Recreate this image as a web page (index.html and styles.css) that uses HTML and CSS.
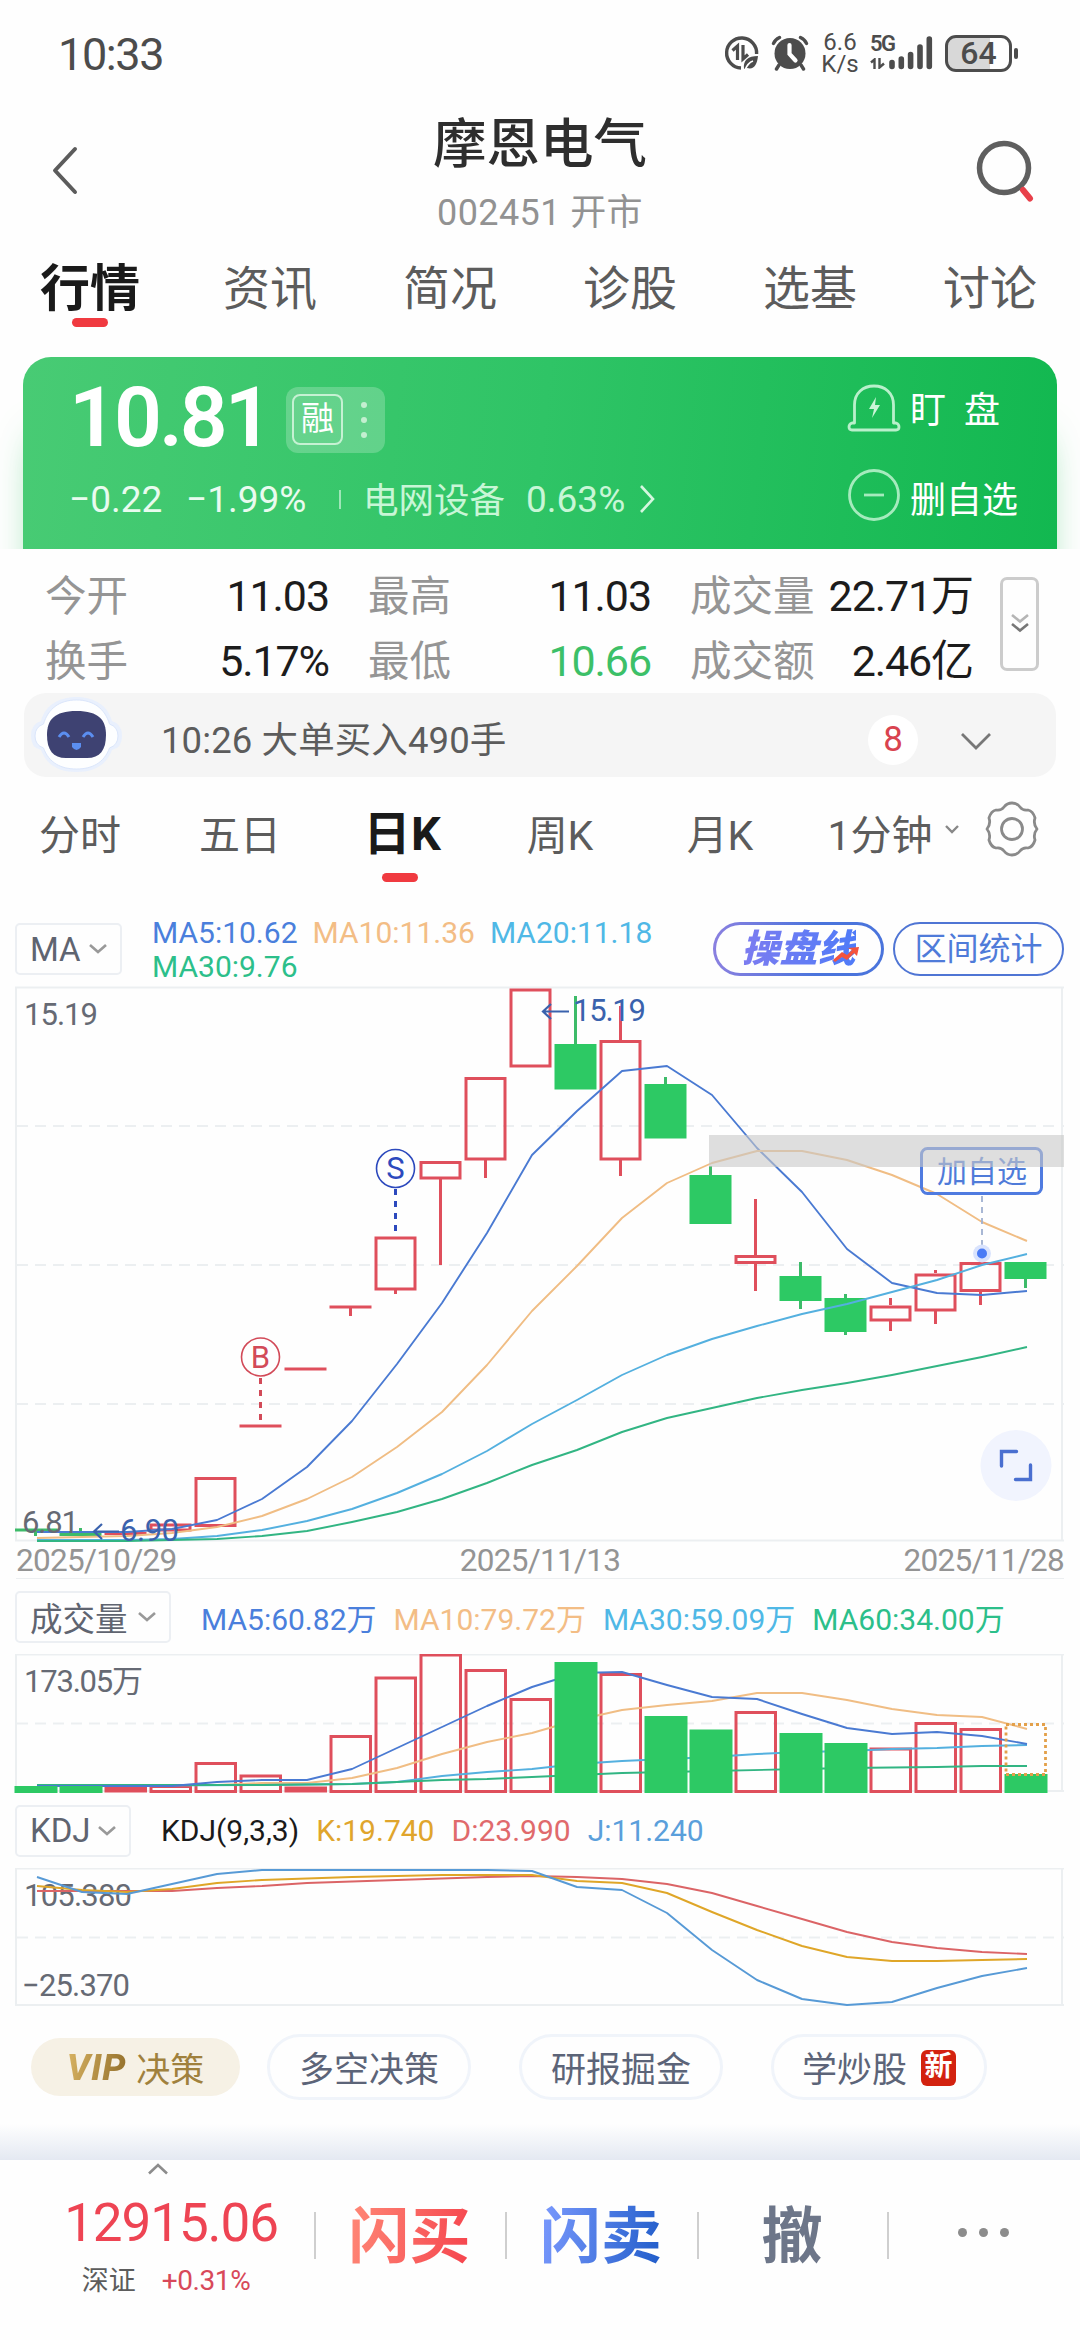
FILE: index.html
```html
<!DOCTYPE html>
<html lang="zh-CN">
<head>
<meta charset="utf-8">
<title>摩恩电气 002451</title>
<link rel="stylesheet" href="styles.css">
</head>
<body>
<div class="screen">

<div class="status">
  <span class="clock">10:33</span>
  <div class="status-right">
    <svg class="ic-data" width="36" height="36" viewBox="0 0 36 36" fill="none" stroke="#4c4c4c" stroke-width="3.4"><path d="M32.6 19A15 15 0 1 0 17 33"/><path d="M8.500 15.500l5-4.500v14M19 10v14l5-4.500" stroke-width="3.2"/><path d="M20 34c-1-9 4-13 14-13-1 9-4 14-11 12z" fill="#4c4c4c" stroke="none"/><path d="M21 35c2-5 5-8 8-9" stroke="#fff" stroke-width="1.800"/></svg>
    <svg class="ic-alarm" width="38" height="36" viewBox="0 0 38 36" fill="none" stroke="#4c4c4c" stroke-width="3.4" stroke-linecap="round"><circle cx="19" cy="18.500" r="15.500" fill="#4c4c4c" stroke="none"/><path d="M2.500 8.500Q4 4.500 8.500 2.500M35.500 8.500Q34 4.500 29.500 2.500M8 30l-2.500 4M30 30l2.500 4"/><path d="M18.500 10v9l6 6.500" stroke="#fff" stroke-width="4.200"/></svg>
    <div class="speed"><span>6.6</span><span>K/s</span></div>
    <div class="signal">
      <div class="net"><b>5G</b><svg width="15" height="11" viewBox="0 0 15 11" fill="none" stroke="#4c4c4c" stroke-width="2.400"><path d="M1 4.500L4.500 1.500V11M9.500 0v9.500L14 5.500"/></svg></div>
      <svg width="44" height="36" viewBox="0 0 44 36" stroke="#4c4c4c" stroke-width="5.600" stroke-linecap="round"><path d="M3 27.500V31.500M12.300 24V31.500M21.600 19.500V31.500M31 12V31.500M40.300 4V31.500"/></svg>
    </div>
    <div class="battery"><span>64</span></div><i class="battery-tip"></i>
  </div>
</div>

<header class="top">
  <svg width="30" height="50" viewBox="0 0 30 50" fill="none" stroke="#5c5c5c" stroke-width="4" stroke-linecap="round" stroke-linejoin="round"><path d="M25 4L5 25.500L25 47"/></svg>
  <div class="title"><h1>摩恩电气</h1><p>002451 开市</p></div>
  <svg width="62" height="66" viewBox="0 0 62 66" fill="none"><circle cx="29" cy="29" r="24.500" stroke="#5f5f5f" stroke-width="5.500"/><path d="M48 51L55 59.500" stroke="#e8404a" stroke-width="6" stroke-linecap="round"/></svg>
</header>

<nav class="tabs"><span class="on">行情</span><span>资讯</span><span>简况</span><span>诊股</span><span>选基</span><span>讨论</span></nav>

<div class="quote-wrap"><section class="quote">
  <div class="q-left">
    <div class="price-row"><strong>10.81</strong><div class="rong"><span>融</span><i></i></div></div>
    <div class="change-row"><span class="chg">−0.22</span><span class="pct">−1.99%</span><i></i><span class="ind">电网设备</span><span class="indp">0.63%</span><svg width="18" height="30" viewBox="0 0 18 30" fill="none" stroke="#d4f7df" stroke-width="2.600"><path d="M2 2L14 15L2 28"/></svg></div>
  </div>
  <div class="q-right">
    <div class="act"><svg width="54" height="50" viewBox="0 0 54 50" fill="none" stroke="#b9f0cb" stroke-width="2.800" stroke-linejoin="round"><path d="M7.500 40V22C7.500 10 16 3 27 3S46.500 10 46.500 22V40H49Q52 41 52 44T49 47H5Q2 47 2 44T5 40Z"/><path d="M29 14L22 26H27L25 35L33 22H28Z" fill="#c9f5d7" stroke="none"/></svg><span class="watch">盯 盘</span></div>
    <div class="act"><svg width="54" height="54" viewBox="0 0 54 54" fill="none" stroke="#a5ebbd" stroke-width="2.800"><circle cx="27" cy="27" r="24.500"/><path d="M17 27H37"/></svg><span class="drop-fav">删自选</span></div>
  </div>
</section></div>

<section class="stats">
  <div class="cells">
    <div><label>今开</label><b>11.03</b></div><div><label>最高</label><b>11.03</b></div><div><label>成交量</label><b>22.71万</b></div>
    <div><label>换手</label><b>5.17%</b></div><div><label>最低</label><b class="down">10.66</b></div><div><label>成交额</label><b>2.46亿</b></div>
  </div>
  <div class="more"><svg width="22" height="24" viewBox="0 0 22 24" fill="none" stroke-width="2.600"><path d="M3 3L11 9.500L19 3" stroke="#b5b5b5"/><path d="M3 12L11 18.500L19 12" stroke="#777"/></svg></div>
</section>

<section class="notice">
  <svg width="94" height="78" viewBox="0 0 94 78">
    <path d="M46.500 1C65 1 78 10 82 25Q92 28 92 40T82 54C76 70 63 76 46.500 76S17 70 11 54Q1 52 1 40T11 25C15 10 28 1 46.500 1Z" fill="#e9f0fd"/>
    <path d="M46.500 4C64 4 75 13 79.500 28Q88 31 88 40T79.500 52C74 67 62 73 46.500 73S19 67 13.500 52Q5 49 5 40T13.500 28C18 13 29 4 46.500 4Z" fill="#fdfeff" stroke="#dbe6fb"/>
    <path d="M46.500 15C69 15 76 24 76 39S70 62 57 62H36C23 62 17 54 17 39S24 15 46.500 15Z" fill="#3e4272"/>
    <path d="M29 41Q34 33 39 41M53 41Q58 33 63 41" fill="none" stroke="#5b8ef0" stroke-width="3"/>
    <path d="M42 47H51V51Q46.500 57 42 51Z" fill="#5b8ef0"/>
  </svg>
  <span class="msg">10:26 大单买入490手</span><b>8</b>
  <svg width="34" height="22" viewBox="0 0 34 22" fill="none" stroke="#777" stroke-width="2.800"><path d="M3 4L17 18L31 4"/></svg>
</section>

<nav class="periods">
  <span>分时</span><span>五日</span><span class="on">日K</span><span>周K</span><span>月K</span><span class="mins">1分钟</span>
  <svg class="tiny" width="16" height="12" viewBox="0 0 16 12" fill="none" stroke="#888" stroke-width="2.400"><path d="M2 2L8 8L14 2"/></svg>
  <svg class="gear" width="58" height="58" viewBox="0 0 58 58" fill="none" stroke="#8a8a8a" stroke-width="2.800" stroke-linejoin="round"><path d="M21 7Q24 3 29 3T37 7Q40 11 45 10Q50 11 52 18Q50 24 54 29Q50 34 52 40Q50 47 45 48Q40 47 37 51Q34 55 29 55T21 51Q18 47 13 48Q8 47 6 40Q8 34 4 29Q8 24 6 18Q8 11 13 10Q18 11 21 7Z"/><circle cx="29" cy="29" r="10.500"/></svg>
</nav>

<div class="ind-row ma-row">
  <div class="drop"><span>MA</span><svg width="18" height="12" viewBox="0 0 18 12" fill="none" stroke="#999" stroke-width="2.600"><path d="M1 2L9 9L17 2"/></svg></div>
  <div class="legend wrap"><span class="c-blue">MA5:10.62</span><span class="c-orange">MA10:11.36</span><span class="c-sky">MA20:11.18</span><span class="c-green">MA30:9.76</span></div>
  <div class="pill trade"><em>操盘线</em><svg width="28" height="16" viewBox="0 0 28 16" fill="#f4533d"><path d="M1 13L10 5L15 8L20 3L16 1L27 0L25 9L22 6L15 13L10 10L3 15Z"/></svg></div>
  <div class="pill">区间统计</div>
</div>

<div class="kchart">
<svg width="1080" height="554" viewBox="0 987 1080 554">
  <g class="frame"><path d="M15 987.500H1064M15 1540.500H1064M16 987V1541M1062 987V1541"/><path class="dash" d="M17 1126H1064M17 1265H1064M17 1404H1064"/></g>
  <g class="up">
    <path d="M104.500 1533.500H146.500M239.500 1426H281.500M284.500 1369H326.500M329.500 1307H371.500M350.500 1307V1316M395.500 1290V1294M440.500 1179V1265M485.500 1160V1178M620.500 1006V1040M620.500 1160V1176M755.500 1199V1255M755.500 1263V1291M890.500 1298V1305M890.500 1321V1331M935.500 1270V1273M935.500 1311V1324M980.500 1256V1262M980.500 1292V1305"/>
    <rect x="151" y="1525" width="39" height="5"/><rect x="196" y="1478.500" width="39" height="47"/><rect x="376" y="1238" width="39" height="51"/><rect x="421" y="1162.500" width="39" height="15.500"/><rect x="466" y="1078.500" width="39" height="80.500"/><rect x="511" y="990" width="39" height="76"/><rect x="601" y="1041.500" width="39" height="117.500"/><rect x="736" y="1256.500" width="39" height="6"/><rect x="871" y="1307" width="39" height="13"/><rect x="916" y="1275" width="39" height="35"/><rect x="961" y="1263.500" width="39" height="27"/>
  </g>
  <g class="dn">
    <path d="M15 1530H57.500M35.500 1530V1536M59.500 1534.500H101.500M80.500 1528V1536M575.500 996V1044M665.500 1077V1084M710.500 1166V1175M800.500 1262V1309M845.500 1294V1335M1025.500 1279V1288"/>
    <path class="fill" d="M554.500 1044h42v45.500h-42zM644.500 1084h42v54.500h-42zM689.500 1175h42v49h-42zM779.500 1276h42v25h-42zM824.500 1298h42v34h-42zM1004.500 1262h42v17h-42z"/>
  </g>
  <polyline class="l-blue" points="37,1532 82,1532 127,1532 172,1529 217,1520 262,1499 307,1467 352,1421 397,1364 442,1303 487,1233 532,1155 577,1111 622,1071 667,1066 712,1095 757,1148 802,1192 847,1249 892,1283 937,1293 982,1295 1027,1291"/>
  <polyline class="l-orange" points="37,1538 82,1537 127,1536 172,1533 217,1527 262,1516 307,1499 352,1477 397,1447 442,1412 487,1365 532,1311 577,1266 622,1218 667,1183 712,1163 757,1151 802,1151 847,1160 892,1175 937,1194 982,1222 1027,1241"/>
  <polyline class="l-sky" points="37,1540 127,1540 172,1539 217,1536 262,1530 307,1521 352,1509 397,1493 442,1474 487,1451 532,1424 577,1400 622,1375 667,1355 712,1339 757,1326 802,1314 847,1304 892,1292 937,1280 982,1265 1027,1254"/>
  <polyline class="l-green" points="37,1541 127,1541 172,1540 217,1539 262,1536 307,1531 352,1522 397,1512 442,1499 487,1483 532,1465 577,1450 622,1432 667,1418 712,1408 757,1398 802,1390 847,1383 892,1375 937,1366 982,1357 1027,1347"/>
  <g class="mark-s"><circle cx="395.500" cy="1168.500" r="19"/><path d="M395.500 1189V1237"/><text x="395.500" y="1179" text-anchor="middle">S</text></g>
  <g class="mark-b"><circle cx="260.500" cy="1357" r="19"/><path d="M260.500 1378V1426"/><text x="260.500" y="1368" text-anchor="middle">B</text></g>
  <text class="axis" x="24" y="1025" textLength="74">15.19</text>
  <text class="axis" x="22" y="1533" textLength="57">6.81</text>
  <g class="peak"><path d="M543 1011.500H569M551 1004L543 1011.500L551 1019M94 1531.500H119M102 1524L94 1531.500L102 1539"/><text x="573" y="1021" textLength="73">15.19</text><text x="120" y="1541" textLength="59">6.90</text></g>
  <g class="fav"><rect x="921.500" y="1148.500" width="120" height="45" rx="6"/><text x="937" y="1182" textLength="90">加自选</text><path d="M982 1196V1247"/><circle cx="982" cy="1253.500" r="9" fill="#d9e3fd"/><circle cx="982" cy="1253.500" r="5" fill="#4a7bf5"/></g>
  <rect x="709" y="1135" width="355" height="32" fill="#c8c8c8" fill-opacity=".6"/>
  <circle cx="1016" cy="1465.500" r="35.500" fill="#f1f4fe"/>
  <path d="M1001.500 1466V1451.500H1016.500M1030.500 1465V1479.500H1015.500" fill="none" stroke="#4a6fd0" stroke-width="3.400" stroke-linecap="round"/>
</svg>
</div>
<div class="dates"><span>2025/10/29</span><span>2025/11/13</span><span>2025/11/28</span></div>

<div class="ind-row">
  <div class="drop drop-vol"><span>成交量</span><svg width="18" height="12" viewBox="0 0 18 12" fill="none" stroke="#999" stroke-width="2.600"><path d="M1 2L9 9L17 2"/></svg></div>
  <div class="legend"><span class="c-blue">MA5:60.82万</span><span class="c-orange">MA10:79.72万</span><span class="c-sky">MA30:59.09万</span><span class="c-green">MA60:34.00万</span></div>
</div>
<div class="vchart">
<svg width="1080" height="139" viewBox="0 1654 1080 139">
  <g class="frame"><path d="M15 1654.500H1064M15 1791H1064M16 1654V1792M1062 1654V1792"/><path class="dash" d="M17 1723.500H1064"/></g>
  <g class="up"><path fill="#fde5e8" d="M106 1788h39.500v3h-39.500zM286 1788h39.500v3h-39.500z"/><path d="M151 1786.500h39.500v5h-39.500zM196 1763.500h39.500v28h-39.500zM241 1776h39.500v15.500h-39.500zM331 1736.500h39.500v55h-39.500zM376 1678h39.500v113.500h-39.500zM421 1655h39.500v136.500h-39.500zM466 1670.500h39.500v121h-39.500zM511 1699.500h39.500v92h-39.500zM601 1674.500h39.500v117h-39.500zM736 1712.500h39.500v79h-39.500zM871 1749h39.500v42.500h-39.500zM916 1723.500h39.500v68h-39.500zM961 1729.500h39.500v62h-39.500z"/></g>
  <polyline class="l-orange" points="37,1785 217,1785 262,1783 307,1783 352,1778 397,1768 442,1754 487,1742 532,1733 577,1720 622,1710 667,1705 712,1701 757,1693 802,1693 847,1700 892,1709 937,1715 982,1717 1027,1729"/>
  <polyline class="l-sky" points="37,1786 262,1785 352,1784 397,1782 442,1776 487,1772 532,1769 577,1764 622,1761 667,1759 712,1757 757,1754 802,1752 847,1751 892,1749 937,1748 982,1746 1027,1745"/>
  <polyline class="l-green" points="37,1785 262,1785 352,1784 397,1782 442,1780 487,1779 532,1777 577,1775 622,1773 712,1771 802,1769 847,1768 937,1767 982,1766 1027,1766"/>
  <polyline class="l-blue" points="37,1786 172,1786 217,1782 262,1780 307,1780 352,1769 397,1748 442,1727 487,1706 532,1687 577,1673 622,1672 667,1685 712,1697 757,1699 802,1714 847,1728 892,1734 937,1732 982,1736 1027,1744"/>
  <path fill="#2dc964" d="M14.500 1786h43v7h-43zM59.500 1786h43v7h-43zM554.500 1662h43v131h-43zM644.500 1716h43v77h-43zM689.500 1729.500h43v64h-43zM779.500 1733h43v60h-43zM824.500 1743h43v50h-43zM1004.500 1774h43v19h-43z"/>
  <rect x="1006" y="1724.500" width="39.500" height="50" fill="none" stroke="#e3a04a" stroke-width="2.800" stroke-dasharray="3 3"/>
  <text class="axis" x="24" y="1692" textLength="119">173.05万</text>
</svg>
</div>

<div class="ind-row">
  <div class="drop drop-kdj"><span>KDJ</span><svg width="18" height="12" viewBox="0 0 18 12" fill="none" stroke="#999" stroke-width="2.600"><path d="M1 2L9 9L17 2"/></svg></div>
  <div class="legend"><span class="c-black">KDJ(9,3,3)</span><span class="c-gold">K:19.740</span><span class="c-rose">D:23.990</span><span class="c-steel">J:11.240</span></div>
</div>
<div class="jchart">
<svg width="1080" height="138" viewBox="0 1868 1080 138">
  <g class="frame"><path d="M15 1868.500H1064M15 2005H1064M16 1868V2006M1062 1868V2006"/><path class="dash" d="M17 1937.500H1064"/></g>
  <text class="axis" x="24" y="1906" textLength="108">105.380</text>
  <text class="axis" x="22" y="1996" textLength="108">−25.370</text>
  <polyline class="l-rose" points="37,1891 172,1891 217,1888 262,1886 307,1883 397,1880 487,1877 532,1876 577,1877 622,1879 667,1884 712,1893 757,1906 802,1919 847,1932 892,1942 937,1948 982,1952 1027,1954"/>
  <polyline class="l-gold" points="37,1886 82,1890 127,1892 172,1889 217,1883 262,1880 352,1877 442,1875 532,1875 577,1881 622,1883 667,1893 712,1912 757,1930 802,1946 847,1957 892,1961 937,1961 982,1960 1027,1959"/>
  <polyline class="l-steel" points="37,1877 82,1892 127,1894 172,1884 217,1874 262,1870 487,1870 532,1871 577,1887 622,1890 667,1913 712,1950 757,1980 802,1999 847,2005 892,2002 937,1988 982,1976 1027,1968"/>
</svg>
</div>

<div class="chips">
  <div class="chip vip"><em>VIP</em><span>决策</span></div>
  <div class="chip">多空决策</div>
  <div class="chip">研报掘金</div>
  <div class="chip wide">学炒股<b>新</b></div>
</div>

<footer class="bar">
  <div class="index">
    <svg width="22" height="12" viewBox="0 0 22 12" fill="none" stroke="#8c8c8c" stroke-width="2.600"><path d="M2 10.500L11 2L20 10.500"/></svg>
    <strong>12915.06</strong>
    <div><span>深证</span><b>+0.31%</b></div>
  </div>
  <div class="cell buy"><span>闪买</span></div>
  <div class="cell sell"><span>闪卖</span></div>
  <div class="cell cancel"><span>撤</span></div>
  <div class="cell dots"><i></i><i></i><i></i></div>
</footer>

</div>
</body>
</html>
```
FILE: styles.css
```css
* { box-sizing: border-box; margin: 0; padding: 0; }
body { background: #fefefe; font-family: Roboto, "Noto Sans CJK SC", sans-serif; color: #5c5c5c; }
i, em { font-style: normal; }
svg { display: block; flex: none; }
.screen { width: 1080px; height: 2340px; overflow: hidden; white-space: nowrap; }

.status { height: 108px; display: flex; justify-content: space-between; padding: 0 62px 0 58px; color: #4c4c4c; align-items: center; }
.clock { font-size: 45px; letter-spacing: -1.400px; font-weight: 400; }
.status-right { display: flex; align-items: center; height: 40px; margin-top: -2px; }
.ic-alarm { margin-left: 11px; }
.speed { display: flex; flex-direction: column; align-items: center; width: 34px; margin-left: 14px; font-size: 24px; line-height: 22px; }
.signal { display: flex; margin-left: 13px; align-items: center; }
.net { width: 19px; height: 36px; display: flex; flex-direction: column; gap: 6px; position: relative; z-index: 1; }
.net b { font-size: 22px; line-height: 17px; letter-spacing: -1.5px; font-weight: 600; }
.battery { width: 67px; height: 37px; margin-left: 12px; border: 3px solid #4c4c4c; border-radius: 11px; background: linear-gradient(90deg, #d8d8d8 69%, #fefefe 69%); display: flex; justify-content: center; align-items: center; font-size: 32px; font-weight: 500; line-height: 32px; }
.battery-tip { width: 4px; height: 11px; border-radius: 2px; background: #4c4c4c; margin-left: 2px; }

.top { height: 132px; display: flex; justify-content: space-between; padding: 0 43px 0 50px; }
.top > svg:first-child { margin-top: 37px; }
.top > svg:last-child { margin-top: 31px; }
.title { margin-left: 25px; text-align: center; }
.title h1 { font-size: 53.500px; line-height: 74px; font-weight: 500; color: #2e2e2e; }
.title p { font-size: 36px; letter-spacing: .4px; line-height: 44px; margin-top: 9px; color: #929292; }
.tabs { height: 100px; display: grid; grid-template-columns: repeat(6, 1fr); text-align: center; font-size: 47px; line-height: 98px; }
.tabs .on { font-size: 50px; font-weight: 700; color: #1a1a1a; }
.on { position: relative; }
.on::after { content: ""; position: absolute; left: 50%; margin-left: -18px; bottom: 13px; width: 36px; height: 9px; border-radius: 5px; background: #f03a40; }

.quote-wrap { height: 209px; padding: 17px 23px 0; overflow: hidden; }
.quote { height: 192px; border-radius: 28px 28px 0 0; background: linear-gradient(96deg, #48cb74, #2fc466 50%, #12b850); box-shadow: 0 66px 40px -18px rgba(40,190,90,.8); display: flex; justify-content: space-between; color: #fff; }
.q-left { padding: 19px 0 0 51px; }
.price-row { display: flex; height: 88px; align-items: center; }
.price-row strong { font-size: 84px; letter-spacing: -3px; line-height: 88px; font-weight: 600; width: 217px; margin: -4px 0 0 -5px; }
.rong { width: 99px; height: 66px; border-radius: 12px; background: rgba(255,255,255,.22); padding: 6px; display: flex; align-items: center; }
.rong span { width: 51px; height: 51px; margin-top: -1px; border: 2px solid #c6f1d3; border-radius: 8px; font-size: 33px; line-height: 46px; text-align: center; }
.rong i { width: 6px; height: 6px; margin-left: 18px; border-radius: 3px; background: #c3efd0; box-shadow: 0 -15px #c3efd0, 0 15px #c3efd0; }
.change-row { display: flex; align-items: center; height: 44px; margin: 13px 0 0 -5px; font-size: 37px; color: #e9fbef; }
.chg { width: 117px; }
.pct { width: 153px; }
.change-row i { width: 2px; height: 19px; background: #9fe6b8; margin-right: 22px; }
.ind { font-size: 35.500px; color: #c8f6d6; width: 163px; margin-top: -3px; }
.indp { color: #c8f6d6; width: 113px; }
.q-right { width: 211px; padding: 22px 0 0; display: flex; flex-direction: column; gap: 29px; }
.act { display: flex; align-items: center; gap: 9px; height: 58px; font-size: 36px; margin-left: 1px; }
.watch { word-spacing: 9px; margin-top: -2px; }
.drop-fav { margin-top: 3px; }

.stats { height: 144px; display: flex; padding: 14px 41px 0 45px; justify-content: space-between; }
.cells { width: 928px; display: grid; grid-template-columns: 284px 283px 283px; column-gap: 39px; grid-auto-rows: 65px; }
.cells div { display: flex; justify-content: space-between; line-height: 67px; }
.cells label { font-size: 41.500px; color: #959595; line-height: 68px; }
.cells b { font-size: 43px; letter-spacing: -1.100px; font-weight: 400; color: #1c1c1c; }
.cells b.down { color: #3cc068; }
.more { width: 39px; height: 94px; border: 3px solid #ccc; border-radius: 7px; margin-top: 14px; display: flex; align-items: center; justify-content: center; }

.notice { height: 84px; margin: 0 24px; border-radius: 22px; background: #f5f5f5; display: flex; align-items: center; padding: 0 63px 0 6px; }
.msg { margin: 5px 0 0 37px; font-size: 36.500px; letter-spacing: .1px; flex: 1; }
.notice b { width: 50px; height: 50px; margin: 10px 41px 0 0; border-radius: 50%; background: #fff; color: #d9434f; font-size: 35px; font-weight: 400; line-height: 50px; text-align: center; }
.notice > svg:last-child { margin-top: 12px; }

.periods { height: 123px; display: grid; grid-template-columns: repeat(6, 160px) 120px; text-align: center; font-size: 41px; line-height: 119px; position: relative; }
.periods .on { font-size: 47px; font-weight: 700; color: #1a1a1a; line-height: 113px; padding-left: 5px; letter-spacing: .5px; }
.periods .on::after { bottom: 18px; }
.tiny { position: absolute; left: 944px; top: 47px; }
.gear { margin: 23px 0 0 23px; }

.ind-row { height: 75px; display: flex; align-items: center; padding: 0 16px 0 15px; }
.ma-row { height: 87px; padding-top: 11px; }
.drop { width: 107px; height: 52px; border: 2px solid #eceff3; border-radius: 5px; padding: 0 13px; display: flex; align-items: center; justify-content: space-between; font-size: 33px; color: #5f6470; }
.drop-vol { width: 156px; font-size: 32.500px; }
.drop-kdj { width: 116px; }
.legend { display: flex; gap: 17px; font-size: 30px; margin-left: 30px; }
.wrap { flex-wrap: wrap; gap: 0 15px; width: 540px; line-height: 34px; margin-top: 2px; }
.c-blue { color: #4a7fdc; } .c-orange { color: #f3bd85; } .c-sky { color: #4fb8e6; } .c-green { color: #2cbf8a; }
.c-black { color: #1a1a1a; } .c-gold { color: #e0a52c; } .c-rose { color: #e06a6c; } .c-steel { color: #5a9fdb; }
.pill { width: 171px; height: 54px; border: 2px solid #4f75d4; border-radius: 27px; font-size: 32px; line-height: 50px; text-align: center; color: #4f7bd9; margin-left: 9px; flex: none; }
.pill.trade { border: 3px solid transparent; background: linear-gradient(#fefefe, #fefefe) padding-box, linear-gradient(90deg, #8a80e0, #4a74dc 60%) border-box; position: relative; margin-left: auto; line-height: 49px; }
.trade em { display: inline-block; font-size: 38px; font-weight: 900; font-style: italic; background: linear-gradient(90deg, #7d7cf0, #4f7bf8); background-clip: text; -webkit-background-clip: text; color: transparent; }
.trade svg { position: absolute; right: 21px; top: 22px; }

.frame path { fill: none; stroke: #eceff1; stroke-width: 2; }
.frame .dash { stroke-dasharray: 11 7; }
.up { fill: none; stroke: #df4f5c; stroke-width: 3; }
.dn { fill: none; stroke: #3dbb69; stroke-width: 3; }
.dn .fill { fill: #2dc964; stroke: none; }
polyline { fill: none; stroke-width: 1.900; stroke-linejoin: round; }
.l-blue { stroke: #4a7ad2; } .l-orange { stroke: #f0bd84; } .l-sky { stroke: #54b0df; } .l-green { stroke: #32b583; }
.l-gold { stroke: #dfa628; } .l-rose { stroke: #db6466; } .l-steel { stroke: #579ad6; }
.kchart svg { overflow: visible; }
svg text { font-family: Roboto, "Noto Sans CJK SC", sans-serif; font-size: 31px; }
.axis { fill: #666a74; }
.mark-s text { fill: #2c49bd; } .mark-s circle, .mark-s path { fill: none; stroke: #2c49bd; stroke-width: 1.600; }
.mark-b text { fill: #d24a58; } .mark-b circle, .mark-b path { fill: none; stroke: #d24a58; stroke-width: 1.600; }
.mark-s path, .mark-b path { stroke-width: 3; stroke-dasharray: 6 6; }
.peak text { fill: #3a62ad; } .peak path { fill: none; stroke: #3a62ad; stroke-width: 2.200; }
.fav rect { fill: none; stroke: #4f7be0; stroke-width: 3; } .fav text { fill: #4f7bd9; font-size: 30px; }
.fav path { stroke: #9fb0d0; stroke-width: 1.800; stroke-dasharray: 6 5; }
.dates { height: 38px; margin: 0 16px; display: flex; justify-content: space-between; font-size: 31.500px; letter-spacing: -.7px; line-height: 39px; color: #949494; border-bottom: 1px solid #eceff1; }

.chips { height: 154px; padding: 28px 0 0 31px; display: flex; background: linear-gradient(#fefefe 118px, #e4e9f2); color: #5c6478; font-size: 35px; }
.chip { width: 204px; height: 66px; margin-right: 48px; border: 3px solid #f0f4fa; border-radius: 33px; display: flex; align-items: center; justify-content: center; padding-bottom: 2px; }
.chip.vip { width: 209px; height: 58px; margin: 4px 27px 0 0; background: #f6f1e5; border: 0; color: #a0813d; font-size: 34px; gap: 8px; padding-bottom: 0; }
.vip em { font-weight: 800; font-style: italic; font-size: 37px; letter-spacing: .6px; padding-right: 2px; background: linear-gradient(100deg, #d9b463, #8f6c28); background-clip: text; -webkit-background-clip: text; color: transparent; }
.chip.wide { width: 216px; margin: 0; gap: 14px; }
.chip b { width: 35px; height: 36px; margin-top: 4px; border-radius: 6px; background: #d3220f; color: #fff; font-size: 28px; line-height: 34px; text-align: center; font-weight: 700; }

.bar { height: 180px; display: grid; grid-template-columns: 314px 191px 192px 190px 193px; background: #fefefe; }
.index { display: flex; flex-direction: column; align-items: center; padding: 3px 0 0 28px; }
.index svg { margin-right: 27px; }
.index strong { font-size: 53px; letter-spacing: -1.100px; font-weight: 400; color: #ee4453; line-height: 62px; margin-top: 17px; }
.index div { display: flex; gap: 26px; font-size: 27px; line-height: 32px; margin-top: 11px; margin-right: 10px; }
.index b { color: #d8495a; font-weight: 400; font-size: 28px; letter-spacing: -.4px; }
.cell { height: 154px; display: flex; align-items: center; justify-content: center; font-size: 61px; font-weight: 700; line-height: 90px; background: linear-gradient(#cfcfcf, #cfcfcf) 0 52px / 2px 47px no-repeat; }
.buy span { background: linear-gradient(100deg, #ff8a78, #f5424c); background-clip: text; -webkit-background-clip: text; color: transparent; }
.sell span { background: linear-gradient(100deg, #7d9bff, #1e5bc8); background-clip: text; -webkit-background-clip: text; color: transparent; }
.cancel { color: #6d7689; }
.dots { gap: 12px; padding-bottom: 10px; }
.dots i { width: 9px; height: 9px; border-radius: 50%; background: #8c8c8c; }
```
